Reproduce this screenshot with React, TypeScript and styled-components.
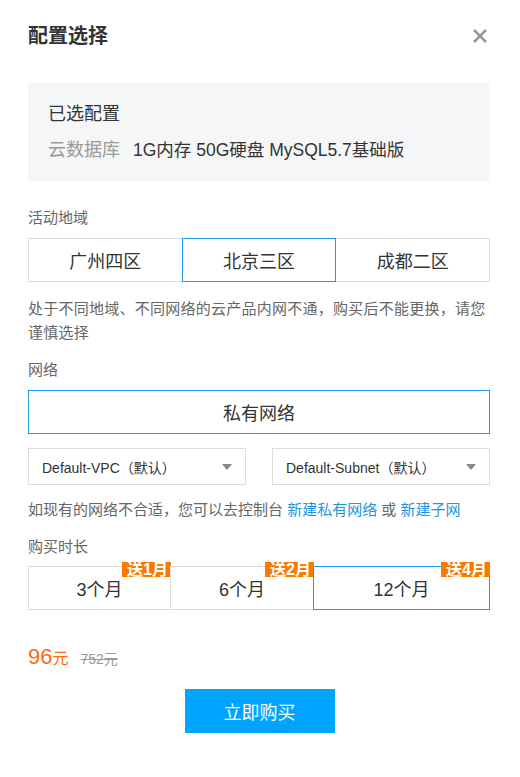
import React from 'react';
import styled, { createGlobalStyle } from 'styled-components';

const GlobalStyle = createGlobalStyle`
  body {
    margin: 0;
    background: #ffffff;
    font-family: "Liberation Sans", "Noto Sans CJK SC", sans-serif;
    color: #333333;
  }
`;

const Dialog = styled.div`
  width: 520px;
  box-sizing: border-box;
  padding: 24px 30px 40px 28px;
`;

const Header = styled.div`
  display: flex;
  align-items: center;
  justify-content: space-between;
  height: 24px;
  margin-bottom: 34px;
`;

const Title = styled.h2`
  margin: 0;
  font-size: 20px;
  line-height: 24px;
  font-weight: 700;
  color: #333333;
`;

const CloseButton = styled.button`
  border: 0;
  background: none;
  padding: 0;
  margin-right: 2px;
  width: 16px;
  height: 16px;
  display: flex;
  cursor: pointer;
`;

const Summary = styled.div`
  background: #f5f6f7;
  padding: 20px 20px;
  display: flex;
  flex-direction: column;
  gap: 12px;
`;

const SummaryTitle = styled.div`
  font-size: 18px;
  line-height: 24px;
  color: #333333;
`;

const SummaryRow = styled.div`
  display: flex;
  align-items: baseline;
  font-size: 18px;
  line-height: 24px;
`;

const SummaryKey = styled.span`
  color: #999999;
  margin-right: 13px;
`;

const SummaryValue = styled.span`
  color: #333333;
  font-size: 17.5px;
`;

const Label = styled.div<{ $top: number }>`
  margin-top: ${p => p.$top}px;
  font-size: 15px;
  line-height: 20px;
  color: #666666;
`;

const TabRow = styled.div<{ $top: number }>`
  display: flex;
  margin-top: ${p => p.$top}px;
`;

const Tab = styled.div<{ $active?: boolean; $basis?: string }>`
  position: relative;
  flex: ${p => (p.$basis ? `0 0 ${p.$basis}` : '1 1 0')};
  box-sizing: border-box;
  height: 44px;
  display: flex;
  align-items: center;
  justify-content: center;
  border: 1px solid ${p => (p.$active ? '#1e9be4' : '#dddddd')};
  z-index: ${p => (p.$active ? 1 : 0)};
  font-size: 18px;
  color: #333333;
  background: #ffffff;
  cursor: pointer;

  & + & {
    margin-left: -1px;
  }
`;

const Badge = styled.span`
  position: absolute;
  top: -5px;
  right: -1px;
  height: 15px;
  line-height: 15px;
  padding: 0 3px 0 5px;
  background: #f77b00;
  color: #ffffff;
  font-size: 16px;
  font-weight: 700;
  overflow: hidden;
  white-space: nowrap;
`;

const Note = styled.p<{ $top: number }>`
  margin: ${p => p.$top}px 0 0;
  font-size: 15px;
  line-height: 24px;
  color: #666666;
`;

const WideNote = styled(Note)`
  letter-spacing: 0.25px;
`;

const Link = styled.a`
  color: #1e96e0;
  text-decoration: none;
`;

const Network = styled.div`
  margin-top: 10px;
  height: 44px;
  box-sizing: border-box;
  border: 1px solid #1e9be4;
  display: flex;
  align-items: center;
  justify-content: center;
  font-size: 18px;
  color: #333333;
`;

const SelectRow = styled.div`
  display: grid;
  grid-template-columns: 1fr 1fr;
  gap: 26px;
  margin-top: 14px;
`;

const Select = styled.div`
  height: 37px;
  box-sizing: border-box;
  border: 1px solid #dddddd;
  display: flex;
  align-items: center;
  justify-content: space-between;
  padding: 0 13px 0 13px;
  font-size: 14px;
  color: #333333;
`;

const Caret = styled.span`
  width: 0;
  height: 0;
  border-left: 5px solid transparent;
  border-right: 5px solid transparent;
  border-top: 6px solid #888888;
`;

const PriceRow = styled.div`
  margin-top: 34px;
  display: flex;
  align-items: baseline;
  height: 24px;
`;

const Price = styled.span`
  color: #ff6a0c;
  font-size: 22px;
`;

const PriceUnit = styled.span`
  font-size: 16px;
`;

const OldPrice = styled.span`
  margin-left: 12px;
  color: #999999;
  font-size: 14px;
  text-decoration: line-through;
`;

const Footer = styled.div`
  display: flex;
  justify-content: center;
  margin-top: 21px;
`;

const BuyButton = styled.button`
  width: 150px;
  height: 44px;
  border: 0;
  background: #00a4ff;
  color: #ffffff;
  font-family: inherit;
  font-size: 18px;
  cursor: pointer;
  margin-left: 1px;
`;

const regions = ['广州四区', '北京三区', '成都二区'];
const durations = [
  { label: '3个月', gift: '送1月', basis: '143px' },
  { label: '6个月', gift: '送2月', basis: '144px' },
  { label: '12个月', gift: '送4月' },
];

export default function App() {
  const region = 1;
  const duration = 2;

  return (
    <>
      <GlobalStyle />
      <Dialog>
        <Header>
          <Title>配置选择</Title>
          <CloseButton aria-label="关闭">
            <svg width="16" height="16" viewBox="0 0 16 16">
              <path d="M2 2 L14 14 M14 2 L2 14" stroke="#999999" strokeWidth="2.6" strokeLinecap="butt" />
            </svg>
          </CloseButton>
        </Header>

        <Summary>
          <SummaryTitle>已选配置</SummaryTitle>
          <SummaryRow>
            <SummaryKey>云数据库</SummaryKey>
            <SummaryValue>1G内存 50G硬盘 MySQL5.7基础版</SummaryValue>
          </SummaryRow>
        </Summary>

        <Label $top={26}>活动地域</Label>
        <TabRow $top={10}>
          {regions.map((r, i) => (
            <Tab key={r} $active={i === region}>{r}</Tab>
          ))}
        </TabRow>
        <WideNote $top={15}>处于不同地域、不同网络的云产品内网不通，购买后不能更换，请您谨慎选择</WideNote>

        <Label $top={15}>网络</Label>
        <Network>私有网络</Network>
        <SelectRow>
          <Select>
            <span>Default-VPC（默认）</span>
            <Caret />
          </Select>
          <Select>
            <span>Default-Subnet（默认）</span>
            <Caret />
          </Select>
        </SelectRow>
        <Note $top={13}>
          如现有的网络不合适，您可以去控制台 <Link href="#">新建私有网络</Link> 或 <Link href="#">新建子网</Link>
        </Note>

        <Label $top={15}>购买时长</Label>
        <TabRow $top={9}>
          {durations.map((d, i) => (
            <Tab key={d.label} $active={i === duration} $basis={d.basis}>
              {d.label}
              <Badge>{d.gift}</Badge>
            </Tab>
          ))}
        </TabRow>

        <PriceRow>
          <Price>
            96<PriceUnit>元</PriceUnit>
          </Price>
          <OldPrice>752元</OldPrice>
        </PriceRow>

        <Footer>
          <BuyButton>立即购买</BuyButton>
        </Footer>
      </Dialog>
    </>
  );
}
